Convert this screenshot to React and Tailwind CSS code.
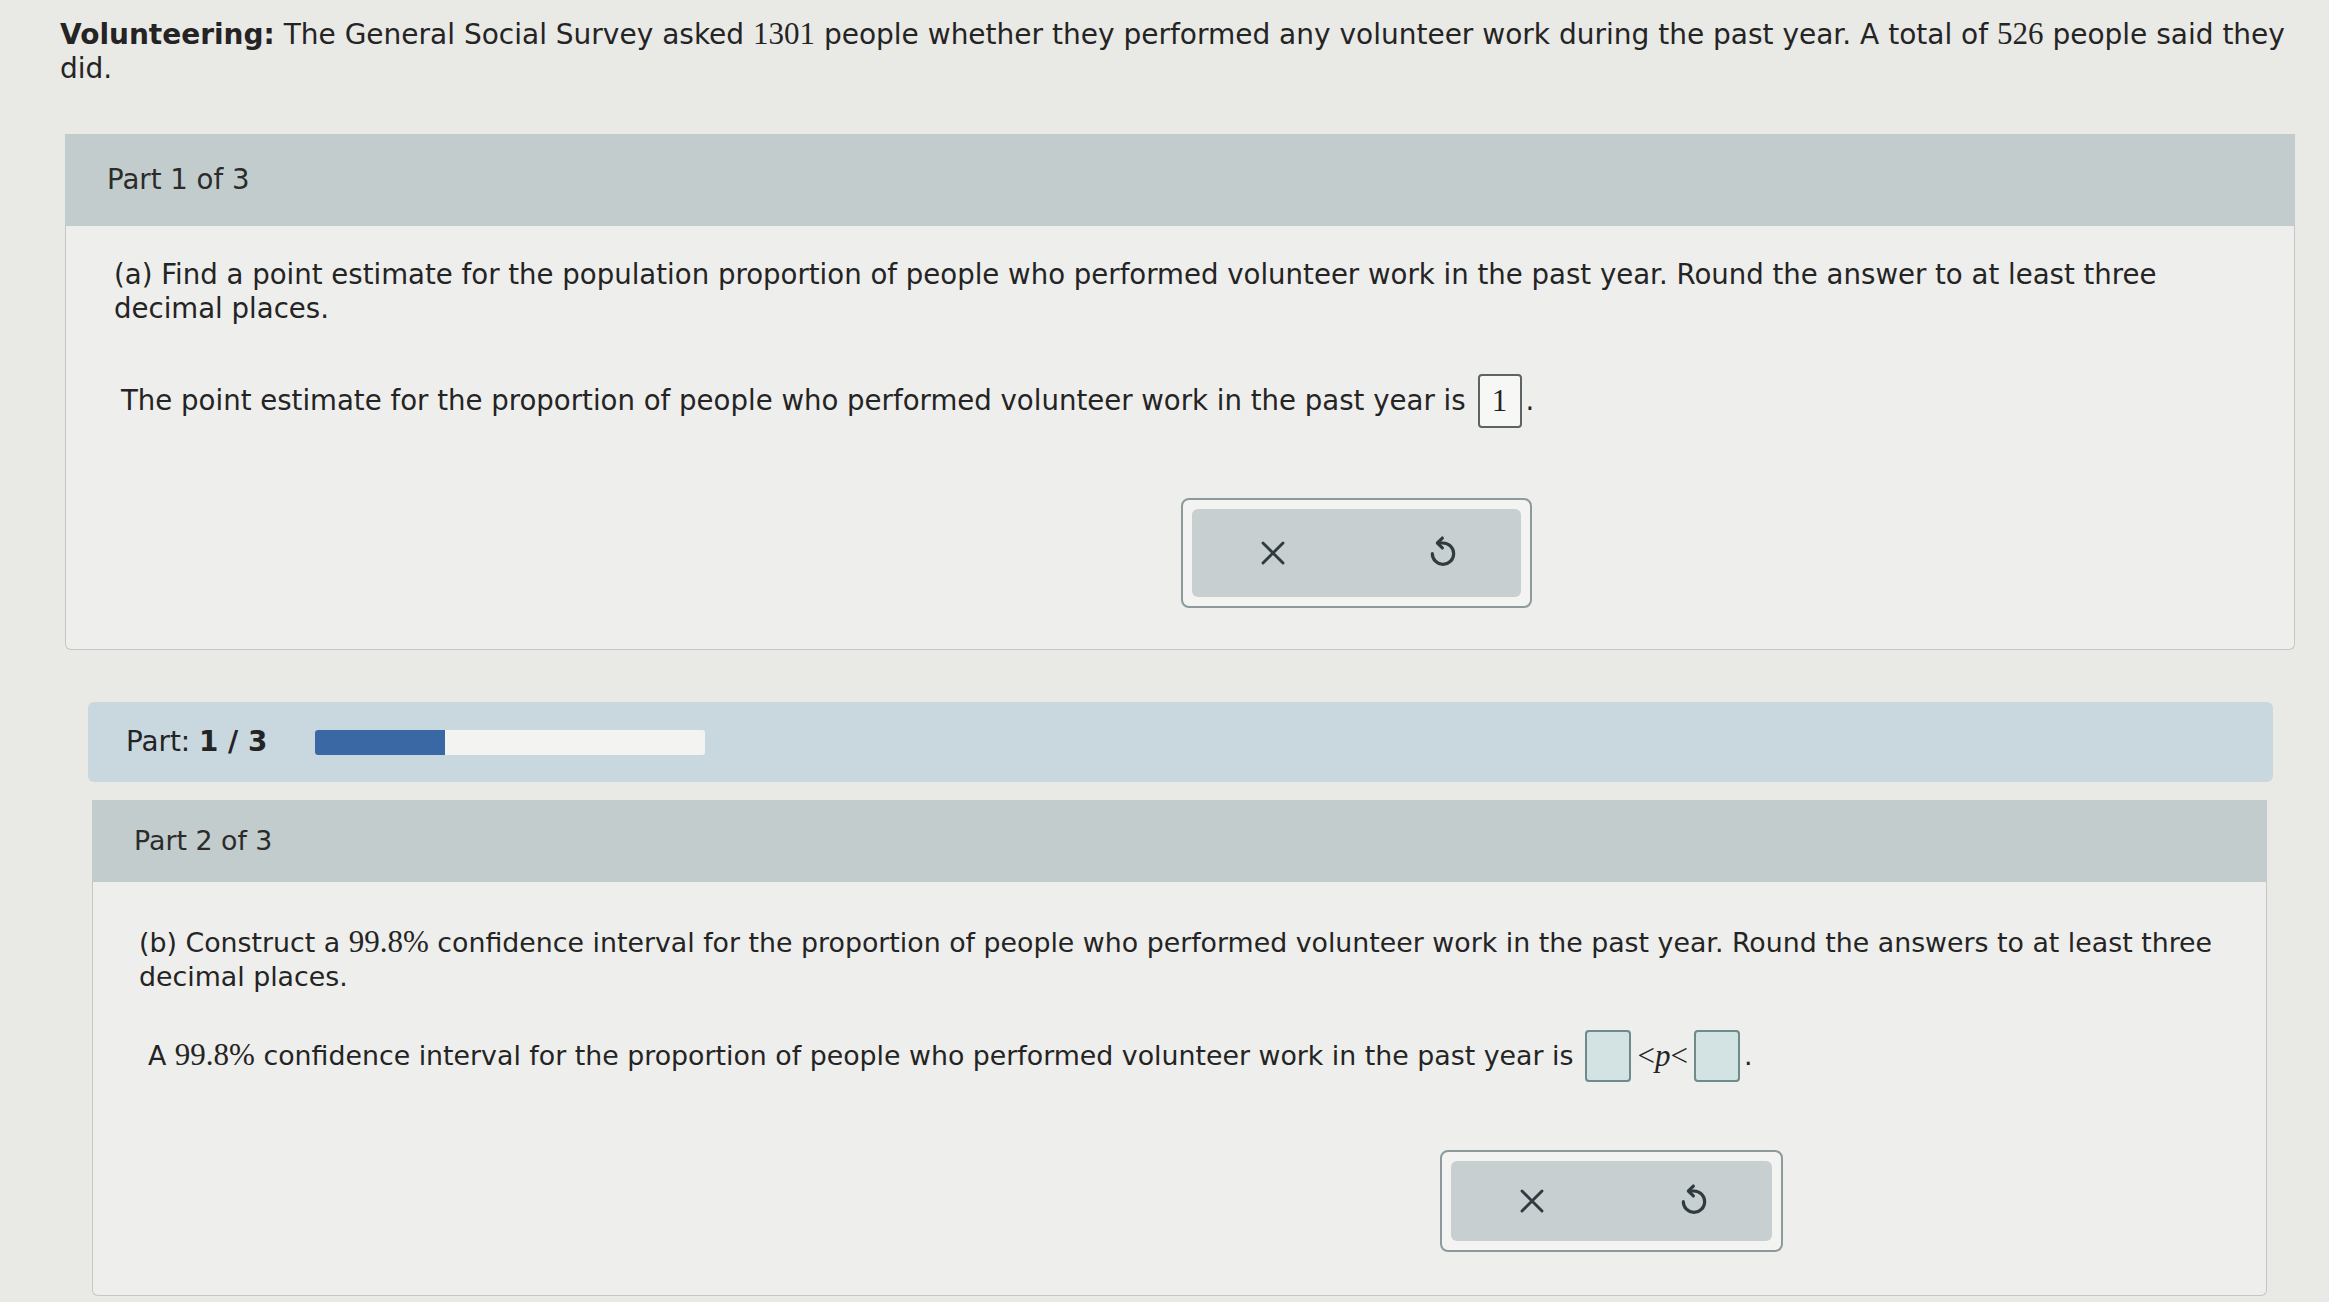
import React from 'react';

const serif = "font-['Liberation_Serif',serif] text-[31px] leading-none";

const XIcon = () => (
  <svg width="30" height="30" viewBox="0 0 24 24" fill="none" stroke="#2f3b40" strokeWidth="2.3" strokeLinecap="round">
    <path d="M4 4l16 16M20 4L4 20" />
  </svg>
);

const UndoIcon = () => (
  <svg width="32" height="40" viewBox="0 0 24 30" fill="none" stroke="#2f3b40" strokeWidth="2.4" strokeLinecap="round" strokeLinejoin="round">
    <path d="M8.5 7.5h3.5a8 8 0 1 1-8 8" />
    <path d="M11.5 3.8L7.8 7.5l3.7 3.7" />
  </svg>
);

const ActionButtons = ({ className }) => (
  <div className={`rounded-lg border-2 border-[#8c9a9b] bg-[#f3f3f1] p-[9px] ${className}`}>
    <div className="flex h-full items-center justify-between rounded-md bg-[#c8cfd0] pl-[66px] pr-[62px]">
      <XIcon />
      <UndoIcon />
    </div>
  </div>
);

const PartHeader = ({ label, h }) => (
  <div className={`flex items-center bg-[#c3cccc] pl-[42px] text-[#2b2b2b] ${h}`}>{label}</div>
);

export default function App() {
  return (
    <div className="min-h-screen w-full overflow-hidden bg-[#e9e9e6] pb-4 font-['DejaVu_Sans',Verdana,sans-serif] leading-[34px] text-[#242424]">
      {/* Question intro */}
      <div className="pl-[60px] pr-[16px] pt-[18px] text-[28px]">
        <span className="font-bold">Volunteering:</span> The General Social Survey asked{' '}
        <span className={serif}>1301</span> people whether they performed any volunteer work during the past year. A
        total of <span className={serif}>526</span> people said they did.
      </div>

      {/* Part 1 */}
      <div className="ml-[65px] mr-[34px] mt-[48px] text-[27.6px]">
        <PartHeader label="Part 1 of 3" h="h-[92px]" />
        <div className="h-[424px] rounded-b-md border border-t-0 border-[#c6c6c3] bg-[#eeeeec] px-[48px] pt-[32px]">
          <p className="pr-[70px]">
            (a) Find a point estimate for the population proportion of people who performed volunteer work in the past
            year. Round the answer to at least three decimal places.
          </p>
          <div className="mt-[48px] flex items-center pl-[7px]">
            <span>The point estimate for the proportion of people who performed volunteer work in the past year is</span>
            <span className="ml-[12px] flex h-[54px] w-[44px] items-center justify-center rounded-[4px] border-2 border-[#5d6466] bg-[#f7f7f5] font-['Liberation_Serif',serif] text-[31px]">
              1
            </span>
            <span className="ml-[4px]">.</span>
          </div>
          <ActionButtons className="ml-[1067px] mt-[70px] h-[110px] w-[351px]" />
        </div>
      </div>

      {/* Progress row */}
      <div className="ml-[88px] mr-[56px] mt-[52px] flex h-[80px] items-center rounded-md bg-[#c9d8df] pl-[38px] text-[27.8px]">
        <span>
          Part: <span className="font-bold">1 / 3</span>
        </span>
        <div className="ml-[48px] h-[25px] w-[390px] overflow-hidden rounded-[3px] bg-[#f3f3f1]">
          <div className="h-full w-[130px] bg-[#3a68a5]" />
        </div>
      </div>

      {/* Part 2 */}
      <div className="ml-[92px] mr-[62px] mt-[18px] text-[26.8px]">
        <PartHeader label="Part 2 of 3" h="h-[82px]" />
        <div className="h-[414px] rounded-b-md border border-t-0 border-[#c6c6c3] bg-[#eeeeec] pl-[46px] pr-[24px] pt-[44px]">
          <p>
            (b) Construct a <span className={serif}>99.8%</span> confidence interval for the proportion of people who
            performed volunteer work in the past year. Round the answers to at least three decimal places.
          </p>
          <div className="mt-[36px] flex items-center pl-[9px]">
            <span>
              A <span className={serif}>99.8%</span> confidence interval for the proportion of people who performed
              volunteer work in the past year is
            </span>
            <span className="ml-[12px] h-[52px] w-[46px] rounded-[4px] border-2 border-[#6e8a8b] bg-[#d3e2e2]" />
            <span className="mx-[6px] font-['Liberation_Serif',serif] text-[31px]">
              &lt;<i>p</i>&lt;
            </span>
            <span className="h-[52px] w-[46px] rounded-[4px] border-2 border-[#6e8a8b] bg-[#d3e2e2]" />
            <span className="ml-[4px]">.</span>
          </div>
          <ActionButtons className="ml-[1301px] mt-[68px] h-[102px] w-[343px]" />
        </div>
      </div>
    </div>
  );
}
